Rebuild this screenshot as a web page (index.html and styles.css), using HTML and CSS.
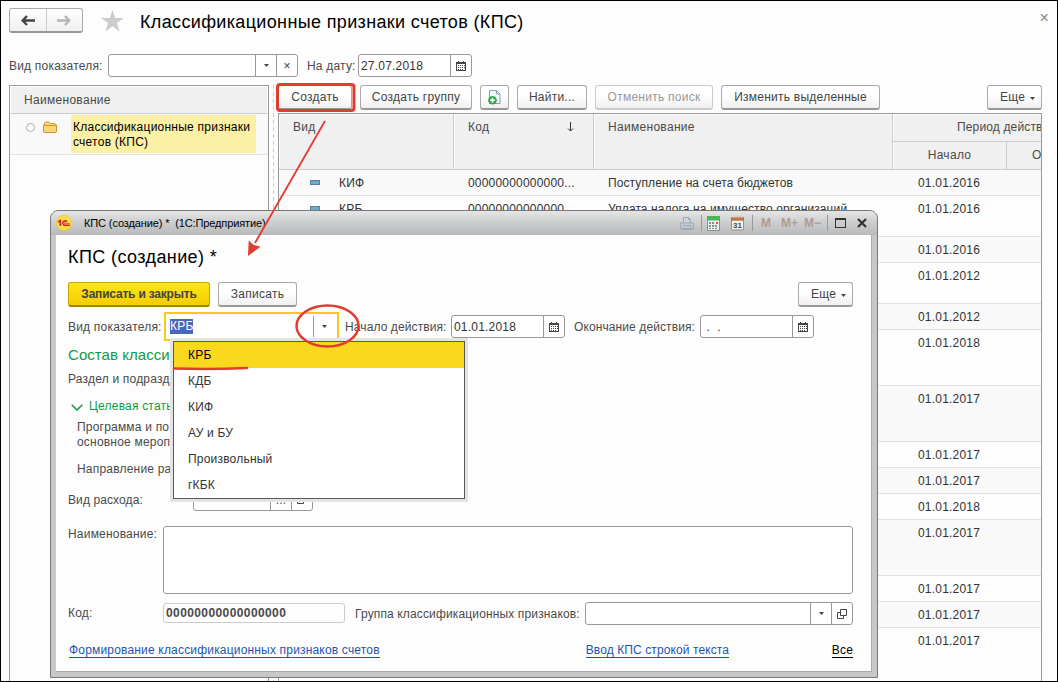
FILE: index.html
```html
<!DOCTYPE html>
<html lang="ru">
<head>
    <meta charset="utf-8">
    <title>Классификационные признаки счетов (КПС)</title>
    <link rel="stylesheet" href="styles.css">
</head>
<body>
<svg class="defs" width="0" height="0">
    <symbol id="i-cal" viewBox="0 0 10 10">
        <path d="M0 1h10v9H0z M2 0h1v1H2z M7 0h1v1H7z" fill="#444"/>
        <path d="M1 3h8v6H1z" fill="#fff"/>
        <path d="M2 4h1v1H2z M4 4h1v1H4z M6 4h1v1H6z M2 6h1v1H2z M4 6h1v1H4z M6 6h1v1H6z M8 4h1v1H8z M8 6h1v1H8z M2 8h1v1H2z M4 8h1v1H4z M6 8h1v1H6z" fill="#444"/>
    </symbol>
    <symbol id="i-down" viewBox="0 0 5 3"><path d="M0 0h5L2.5 3z" fill="#444"/></symbol>
    <symbol id="i-open" viewBox="0 0 10 10">
        <path d="M3.5 .5h6v6h-6z M3.5 3.5h-3v6h6v-3" fill="none" stroke="#444"/>
    </symbol>
</svg>
<div class="app">
    <header class="head">
        <div class="nav">
            <span><svg width="14" height="11" viewBox="0 0 14 11"><path d="M6 1L1.700 5.500 6 10M2 5.500h12" fill="none" stroke="#444" stroke-width="2.400"/></svg></span>
            <span><svg width="14" height="11" viewBox="0 0 14 11"><path d="M8 1l4.300 4.500L8 10M12 5.500H0" fill="none" stroke="#b5b5b5" stroke-width="2.400"/></svg></span>
        </div>
        <svg class="star" width="23" height="22" viewBox="0 0 23 22"><path d="M11.500 0l2.700 8H23l-7.100 5.100 2.700 8.400-7.100-5.200-7.100 5.200 2.700-8.400L0 8h8.800z" fill="#ccc"/></svg>
        <h1>Классификационные признаки счетов (КПС)</h1>
        <span class="close">×</span>
    </header>

    <div class="filter">
        <label class="l-kind">Вид показателя:</label>
        <div class="field f-kind"><span class="val"></span><span class="btn"><svg width="5" height="3"><use href="#i-down"/></svg></span><span class="btn x">×</span></div>
        <label class="l-date">На дату:</label>
        <div class="field f-date"><span class="val">27.07.2018</span><span class="btn"><svg width="10" height="10"><use href="#i-cal"/></svg></span></div>
    </div>

    <div class="main">
        <div class="tree">
            <div class="tree-head">Наименование</div>
            <div class="tree-row">
                <i class="dot"></i>
                <svg width="14" height="12" viewBox="0 0 14 12"><path d="M1 11V3l1.500-2h3.500l1.500 1.500h4.500l1 1V11z" fill="#f8dc6a" stroke="#d09236"/><path d="M.5 4.500h13V11l-.5.500H1L.5 11z" fill="#f6d67a" stroke="#d09236"/></svg>
                <span class="sel">Классификационные признаки счетов (КПС)</span>
            </div>
        </div>
        <div class="split"></div>
        <div class="list">
            <div class="tools">
                <button class="b1">Создать</button>
                <button class="b2">Создать группу</button>
                <button class="b3"><svg width="13" height="15" viewBox="0 0 13 15"><path d="M1.500 .5h7l3.500 3.500v9.500h-10.500z" fill="#f4f8fa" stroke="#8a9fac"/><path d="M8.500 .5v3.500H12" fill="none" stroke="#8a9fac"/><circle cx="4.500" cy="10.300" r="4.300" fill="#2ca843"/><path d="M4.500 7.800v5M2 10.300h5" stroke="#fff" stroke-width="1.600"/></svg></button>
                <button class="b4">Найти...</button>
                <button class="b5" disabled>Отменить поиск</button>
                <button class="b6">Изменить выделенные</button>
                <button class="more">Еще <svg width="5" height="3"><use href="#i-down"/></svg></button>
            </div>
            <div class="grid">
                <div class="grid-head">
                    <div>Вид</div>
                    <div>Код<svg class="sort" width="7" height="10" viewBox="0 0 7 10"><path d="M3.500 0v9M1 6.500l2.500 2.500L6 6.500" fill="none" stroke="#333"/></svg></div>
                    <div>Наименование</div>
                    <div class="period">
                        <div class="p-top">Период действия</div>
                        <div class="p-sub"><span>Начало</span><span>Окончание</span></div>
                    </div>
                </div>
                <div class="row"><span><i class="mark"></i>КИФ</span><span>00000000000000...</span><span class="t">Поступление на счета бюджетов</span><span class="d">01.01.2016</span></div>
                <div class="row h2"><span><i class="mark"></i>КРБ</span><span>00000000000000...</span><span class="t">Уплата налога на имущество организаций</span><span class="d">01.01.2016</span></div>
                <div class="row"><span></span><span></span><span></span><span class="d">01.01.2016</span></div>
                <div class="row h2"><span></span><span></span><span></span><span class="d">01.01.2012</span></div>
                <div class="row"><span></span><span></span><span></span><span class="d">01.01.2012</span></div>
                <div class="row h3"><span></span><span></span><span></span><span class="d">01.01.2018</span></div>
                <div class="row h3"><span></span><span></span><span></span><span class="d">01.01.2017</span></div>
                <div class="row"><span></span><span></span><span></span><span class="d">01.01.2017</span></div>
                <div class="row"><span></span><span></span><span></span><span class="d">01.01.2017</span></div>
                <div class="row"><span></span><span></span><span></span><span class="d">01.01.2018</span></div>
                <div class="row h3"><span></span><span></span><span></span><span class="d">01.01.2017</span></div>
                <div class="row"><span></span><span></span><span></span><span class="d">01.01.2017</span></div>
                <div class="row"><span></span><span></span><span></span><span class="d">01.01.2017</span></div>
                <div class="row last"><span></span><span></span><span></span><span class="d">01.01.2017</span></div>
            </div>
        </div>
    </div>

    <div class="dialog">
        <div class="bar">
            <svg class="logo" width="16" height="16" viewBox="0 0 16 16"><circle cx="8" cy="8" r="7.500" fill="#fbe04c" stroke="#f3c83c"/><path d="M2 7l2.300-1.500V11" fill="none" stroke="#d8232a" stroke-width="1.700"/><path d="M11 6.800A2.300 2.300 0 1 0 9 10.300h5" fill="none" stroke="#d8232a" stroke-width="1.500"/><path d="M10 7.600a.9.900 0 1 0-.8 1h4.800" fill="none" stroke="#d8232a" stroke-width=".7"/></svg>
            <span class="caption">КПС (создание) *&nbsp; (1С:Предприятие)</span>
            <div class="sys">
                <svg width="16" height="15" viewBox="0 0 16 15"><path d="M4.500 7V1.500h5l2 2V7M1.500 7h13v5.500h-13zM4 9.500h8v3M2.500 12.500v1h11v-1M9.500 1.500v2h2" fill="none" stroke="#9aabbb"/></svg>
                <i class="sep s1"></i>
                <svg width="13" height="15" viewBox="0 0 13 15"><path d="M.5 .5h12v14H.5z" fill="#eef1f1" stroke="#81938d"/><path d="M0 0h13v4.500H0z" fill="#46b955"/><path d="M2 6h2v2H2zM5 6h2v2H5zM2 9h2v2H2zM5 9h2v2H5zM8 9h2v2H8zM2 12h2v1H2zM5 12h2v1H5zM8 12h2v1H8z" fill="#839087"/><path d="M9 6h2v2H9z" fill="#e25050"/></svg>
                <svg class="date-ic" width="13" height="16" viewBox="0 0 14 16"><path d="M.5 2.500h13v13H.5z" fill="#f5f3ef" stroke="#8d8984"/><path d="M0 2h14v3.500H0z" fill="#bd7044"/><path d="M2.500 0v3M5.500 0v3M8.500 0v3M11.500 0v3" stroke="#e4c5ab"/><text x="7" y="13.500" text-anchor="middle" font-size="8.500" font-weight="bold" fill="#444">31</text></svg>
                <i class="sep s2"></i>
                <b class="m1">M</b><b class="m2">M+</b><b class="m3">M−</b>
                <i class="sep s3"></i>
                <i class="max"></i>
                <svg width="10" height="10" viewBox="0 0 10 10"><path d="M1 1l8 8M9 1L1 9" stroke="#333" stroke-width="2.200"/></svg>
            </div>
        </div>
        <div class="form">
            <h2>КПС (создание) *</h2>
            <div class="cmd">
                <button class="primary">Записать и закрыть</button>
                <button class="save">Записать</button>
                <button class="more">Еще <svg width="5" height="3"><use href="#i-down"/></svg></button>
            </div>
            <div class="line params">
                <label class="l-kind2">Вид показателя:</label>
                <div class="combo"><span class="val"><mark>КРБ</mark></span><span class="btn"><svg width="5" height="3"><use href="#i-down"/></svg></span></div>
                <label class="l-start">Начало действия:</label>
                <div class="field f-start"><span class="val">01.01.2018</span><span class="btn"><svg width="10" height="10"><use href="#i-cal"/></svg></span></div>
                <label class="l-end">Окончание действия:</label>
                <div class="field f-start"><span class="val">&nbsp;.&nbsp; .</span><span class="btn"><svg width="10" height="10"><use href="#i-cal"/></svg></span></div>
            </div>
            <div class="group">Состав класси</div>
            <div class="line section">Раздел и подразд</div>
            <div class="line target"><svg width="12" height="7" viewBox="0 0 12 7"><path d="M.7 .7L6 6l5.300-5.300" fill="none" stroke="#129848" stroke-width="1.500"/></svg>Целевая стать</div>
            <div class="line program">Программа и по<br>основное мероп</div>
            <div class="line direction">Направление ра</div>
            <div class="line expense"><label>Вид расхода:</label><div class="field f-exp"><span class="val"></span><span class="btn dots">...</span><span class="btn"><svg width="10" height="10"><use href="#i-open"/></svg></span></div></div>
            <div class="line name"><label>Наименование:</label><div class="area"></div></div>
            <div class="line code">
                <label class="l-code">Код:</label>
                <div class="code-val">00000000000000000</div>
                <label class="l-group">Группа классификационных признаков:</label>
                <div class="field f-group"><span class="val"></span><span class="btn"><svg width="5" height="3"><use href="#i-down"/></svg></span><span class="btn"><svg width="10" height="10"><use href="#i-open"/></svg></span></div>
            </div>
            <div class="links"><a class="a1">Формирование классификационных признаков счетов</a><a class="a2">Ввод КПС строкой текста</a><a class="all">Все</a></div>
        </div>
        <div class="menu">
            <div class="active">КРБ</div>
            <div>КДБ</div>
            <div>КИФ</div>
            <div>АУ и БУ</div>
            <div>Произвольный</div>
            <div>гКБК</div>
        </div>
    </div>

    <!-- red callouts -->
    <svg class="notes" width="1058" height="682" viewBox="0 0 1058 682">
        <rect x="277.500" y="84.500" width="76.500" height="26" rx="2.500" fill="none" stroke="#e23b30" stroke-width="3"/>
        <path d="M325 121L255 243" stroke="#e23b30" stroke-width="1.800"/>
        <path d="M248 256l.7-15.500 5 4.500 6.800 1.800z" fill="#e23b30"/>
        <ellipse cx="327.500" cy="326" rx="31" ry="20.500" fill="none" stroke="#e23b30" stroke-width="2.500"/>
        <path d="M174 368.500q37 1 73-.5" fill="none" stroke="#e23b30" stroke-width="2.500" stroke-linecap="round"/>
    </svg>
</div>
</body>
</html>
```
FILE: styles.css
```css
* {
    box-sizing: border-box;
}
body {
    margin: 0;
    font-family: "Liberation Sans", Arial, sans-serif;
    font-size: 12px;
    letter-spacing: 0.2px;
    color: #333;
}
.defs {
    position: absolute;
}
.app {
    position: relative;
    width: 1058px;
    height: 682px;
    border: 1px solid #000;
    background: #fdfdfd;
    overflow: hidden;
    white-space: nowrap;
}
label {
    color: #4a4a4a;
    flex: none;
}

/* header */
.head {
    display: flex;
    align-items: flex-start;
    height: 53px;
    padding: 7px 8px 0;
}
.nav {
    display: flex;
    width: 74px;
    height: 25px;
    border: 1px solid #aaa;
    border-bottom: 2px solid #999;
    border-radius: 3px;
    background: linear-gradient(#fff, #f0f0f0);
}
.nav span {
    flex: 1;
    display: flex;
    align-items: center;
    justify-content: center;
}
.nav span + span {
    border-left: 1px solid #ccc;
}
.star {
    margin: 2px 0 0 18px;
}
h1 {
    margin: 3px 0 0 16px;
    font-size: 18px;
    line-height: 22px;
    font-weight: normal;
    color: #000;
    letter-spacing: 0.35px;
}
.close {
    margin: 0 0 0 auto;
    font-size: 16px;
    line-height: 20px;
    color: #888;
}

/* inputs */
.filter {
    display: flex;
    align-items: center;
    height: 23px;
    padding-left: 8px;
}
.field {
    display: flex;
    flex: none;
    height: 23px;
    border: 1px solid #999;
    border-radius: 3px;
    background: #fff;
    color: #333;
}
.field .val {
    flex: 1;
    padding-left: 2px;
    line-height: 22px;
}
.btn {
    display: flex;
    align-items: center;
    justify-content: center;
    width: 21px;
    border-left: 1px solid #999;
    color: #444;
}
.l-kind {
    width: 99px;
}
.f-kind {
    width: 190px;
}
.l-date {
    width: 51px;
    margin-left: 9px;
}
.f-date {
    width: 114px;
}

button {
    display: flex;
    flex: none;
    align-items: center;
    justify-content: center;
    height: 25px;
    padding: 0;
    border: 1px solid #aaa;
    border-bottom: 2px solid #999;
    border-radius: 3px;
    background: linear-gradient(#fff 40%, #f0f0f0);
    font: inherit;
    letter-spacing: 0.25px;
    color: #444;
}
button:disabled {
    color: #999;
    border-color: #ccc;
}
.more {
    width: 55px;
    margin-left: auto;
    gap: 5px;
    padding-left: 6px;
}
.more svg {
    margin-top: 3px;
}

/* tree */
.main {
    display: flex;
    margin: 8px 0 0 8px;
    height: 600px;
}
.tree {
    width: 260px;
    border: 1px solid #999;
}
.tree-head {
    height: 28px;
    padding-left: 13px;
    line-height: 27px;
    letter-spacing: 0.3px;
    color: #4a4a4a;
    background: #f0f0f0;
    border: 1px solid #fff;
    border-bottom: 1px solid #ccc;
}
.tree-row {
    display: flex;
    align-items: flex-start;
    height: 41px;
    padding: 1px 0 0 16px;
    background: #f9f9f9;
    border-bottom: 1px solid #e2e2e2;
}
.dot {
    width: 9px;
    height: 9px;
    margin: 8px 8px 0 0;
    border: 1px solid #aaa;
    border-radius: 50%;
    background: #fff;
}
.tree-row svg {
    margin-top: 6px;
}
.sel {
    width: 185px;
    height: 38px;
    margin-left: 14px;
    padding: 5px 0 0 2px;
    line-height: 15px;
    letter-spacing: 0.24px;
    white-space: normal;
    background: #fbf0a5;
    color: #000;
}
.split {
    width: 9px;
    background: repeating-linear-gradient(#ccc 0 4px, transparent 4px 7px) 4px 0 / 1px 100% no-repeat;
}

/* list */
.list {
    width: 764px;
}
.tools {
    display: flex;
    gap: 8px;
    height: 28px;
}
.b1 {
    width: 74px;
}
.b2 {
    width: 112px;
}
.b3 {
    width: 29px;
}
.b4 {
    width: 70px;
}
.b5 {
    width: 118px;
}
.b6 {
    width: 159px;
}
.grid {
    height: 580px;
    border: 1px solid #999;
    overflow: hidden;
}
.grid-head {
    display: grid;
    grid-template-columns: 175px 140px 299px 148px;
    height: 56px;
    color: #4a4a4a;
    background: #f0f0f0;
    border-bottom: 1px solid #ccc;
    letter-spacing: 0.3px;
}
.grid-head > div {
    display: flex;
    justify-content: space-between;
    padding: 5px 0 0 14px;
    line-height: 16px;
    border-right: 1px solid #ccc;
    box-shadow: inset 1px 1px #fff;
}
.sort {
    margin: 3px 19px 0 0;
}
.grid-head .period {
    display: block;
    padding: 0;
    border: 0;
}
.p-top {
    height: 28px;
    padding: 5px 0 0 64px;
    border-bottom: 1px solid #ccc;
    letter-spacing: 0.15px;
}
.p-sub {
    display: flex;
    line-height: 27px;
}
.p-sub span {
    width: 114px;
    flex: none;
    text-align: center;
    border-right: 1px solid #ccc;
}
.p-sub span + span {
    text-align: left;
    padding-left: 25px;
}
.row {
    display: grid;
    grid-template-columns: 175px 140px 299px 148px;
    height: 26px;
    line-height: 26px;
    border-bottom: 1px solid #e2e2e2;
}
.row:nth-child(even) {
    background: #f9f9f9;
}
.row.last {
    border: 0;
}
.row span {
    padding-left: 14px;
}
.row .t {
    letter-spacing: 0.1px;
}
.row .d {
    padding-left: 25px;
}
.h2 {
    height: 41px;
}
.h3 {
    height: 56px;
}
.mark {
    display: inline-block;
    width: 10px;
    height: 5px;
    margin: 0 19px 2px 17px;
    vertical-align: middle;
    background: #6fa8c9;
    border: 1px solid #55809c;
}

/* dialog window */
.dialog {
    position: absolute;
    left: 49px;
    top: 209px;
    width: 828px;
    height: 468px;
    border: 1px solid #777;
    border-radius: 8px 8px 0 0;
    padding: 0 5px 5px;
    background: #c6c7c9;
}
.bar {
    display: flex;
    align-items: center;
    height: 24px;
    margin: 0 -5px;
    padding: 0 10px 0 5px;
    border-radius: 7px 7px 0 0;
    background: linear-gradient(#e6e6e6, #d0d1d2 40%, #b7b9bb);
}
.caption {
    margin-left: 12px;
    font-size: 11px;
    letter-spacing: -0.12px;
    color: #000;
}
.sys {
    display: flex;
    align-items: center;
    margin-left: auto;
    letter-spacing: 0;
    color: #b29c93;
}
.sep {
    width: 1px;
    height: 16px;
    background: #999;
}
.s1 {
    margin: 0 5px 0 6px;
}
.date-ic {
    margin-left: 11px;
}
.s2 {
    margin: 0 8px;
}
.m2 {
    margin-left: 10px;
}
.m3 {
    margin-left: 6px;
}
.s3 {
    margin: 0 7px 0 6px;
}
.max {
    width: 11px;
    height: 10px;
    margin-right: 11px;
    border: 1px solid #333;
    border-top-width: 2px;
}
.form {
    height: 437px;
    padding: 12px 18px 0 12px;
    background: #fdfdfd;
    border-right: 1px solid #aaa;
    border-bottom: 1px solid #aaa;
}
h2 {
    margin: 0;
    height: 35px;
    font-size: 18px;
    line-height: 20px;
    font-weight: normal;
    letter-spacing: 0.4px;
    color: #000;
}
.cmd {
    display: flex;
    gap: 8px;
    height: 30px;
}
.primary {
    width: 142px;
    font-weight: bold;
    letter-spacing: -0.2px;
    background: linear-gradient(#ffe616, #f5cd00);
    border-color: #c6a600 #c6a600 #9c8300;
}
.save {
    width: 79px;
}
.line {
    display: flex;
    color: #4a4a4a;
}
.params {
    align-items: center;
    height: 29px;
}
.l-kind2 {
    width: 96px;
}
.combo {
    display: flex;
    width: 175px;
    height: 29px;
    border: 2px solid #fbc91c;
    background: #fff;
}
.combo .val {
    flex: 1;
    padding: 5px 0 0 4px;
}
mark {
    display: inline-block;
    height: 15px;
    line-height: 15px;
    color: #fff;
    background: #4a66bd;
}
.combo .btn {
    width: 24px;
    margin: 2px 0;
    padding-right: 2px;
}
.l-start {
    width: 106px;
    margin-left: 6px;
    letter-spacing: 0.1px;
}
.f-start {
    width: 114px;
}
.l-end {
    width: 126px;
    margin-left: 9px;
    letter-spacing: 0.1px;
}
.group {
    height: 31px;
    padding-top: 5px;
    font-size: 15px;
    line-height: 18px;
    letter-spacing: 0.05px;
    color: #129848;
}
.section {
    height: 27px;
}
.target {
    height: 21px;
    gap: 6px;
    padding-left: 3px;
    color: #129848;
}
.target svg {
    margin-top: 5px;
}
.program {
    height: 42px;
    padding-left: 9px;
    line-height: 15px;
}
.direction {
    height: 25px;
    padding-left: 9px;
}
.expense {
    height: 39px;
}
.expense label {
    width: 125px;
    padding-top: 6px;
    letter-spacing: 0.1px;
}
.dots {
    padding-top: 2px;
}
.f-exp {
    width: 120px;
    height: 24px;
}
.name {
    height: 77px;
}
.name label {
    width: 95px;
    padding-top: 1px;
}
.area {
    flex: 1;
    height: 68px;
    border: 1px solid #999;
    border-radius: 3px;
    background: #fff;
}
.code {
    height: 41px;
}
.l-code {
    width: 95px;
    padding-top: 3px;
}
.code-val {
    width: 183px;
    height: 20px;
    padding-left: 2px;
    line-height: 18px;
    font-weight: bold;
    letter-spacing: 0.4px;
    border: 1px solid #ccc;
    border-radius: 3px;
}
.l-group {
    width: 230px;
    margin-left: 10px;
    padding-top: 4px;
    letter-spacing: 0.14px;
}
.f-group {
    width: 268px;
    margin-top: -1px;
}
.links {
    display: flex;
    line-height: 13px;
    letter-spacing: 0.18px;
}
.links a {
    height: 14px;
    color: #1c55ae;
    border-bottom: 1px solid #1c55ae;
}
.a1 {
    margin-left: 1px;
}
.links .a2 {
    margin-left: 206px;
    letter-spacing: 0.1px;
}
.links .all {
    margin-left: auto;
    color: #000;
    border-color: #000;
}

/* drop-down list */
.menu {
    position: absolute;
    left: 122px;
    top: 130px;
    width: 292px;
    height: 158px;
    border: 1px solid #595959;
    background: #fff;
    box-shadow: 0 0 0 3px #e4e4e4;
}
.menu div {
    height: 26px;
    padding-left: 14px;
    line-height: 26px;
}
.menu .active {
    background: #fad81e;
    color: #000;
}
.notes {
    position: absolute;
    left: -1px;
    top: -1px;
}
```
